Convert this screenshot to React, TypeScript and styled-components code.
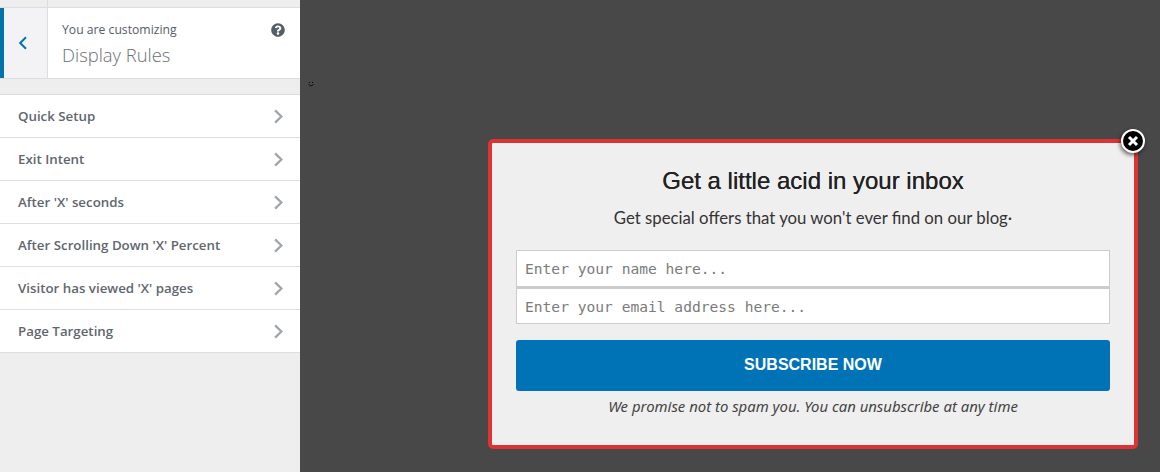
import React from 'react'
import styled, { createGlobalStyle } from 'styled-components'
import { FaQuestionCircle } from 'react-icons/fa'

const GlobalStyle = createGlobalStyle`
  html, body {
    margin: 0;
    padding: 0;
    height: 100%;
    overflow: hidden;
  }
  #root {
    height: 100%;
  }
  * {
    box-sizing: border-box;
  }
`

const Page = styled.div`
  display: flex;
  width: 1160px;
  height: 472px;
  font-family: "Open Sans", "Liberation Sans", sans-serif;
`

const Sidebar = styled.aside`
  width: 300px;
  height: 100%;
  flex: none;
  display: flex;
  flex-direction: column;
  background: #eeeeee;
`

const TopStrip = styled.div`
  height: 8px;
  border-bottom: 1px solid #dddddd;
`

const TopCell = styled.div`
  width: 48px;
  height: 7px;
  border-right: 1px solid #dddddd;
`

const Header = styled.header`
  height: 71px;
  display: flex;
  background: #ffffff;
  border-bottom: 1px solid #dddddd;
`

const BackButton = styled.button`
  width: 48px;
  flex: none;
  display: flex;
  align-items: center;
  justify-content: center;
  padding: 0 5px 0 0;
  background: #f3f3f5;
  border: 0;
  border-left: 4px solid #0073aa;
  border-right: 1px solid #dddddd;
  color: #0073aa;
`

const HeaderText = styled.div`
  flex: 1;
  padding: 13px 0 0 14px;
  color: #555d66;
`

const Eyebrow = styled.div`
  font-size: 12.2px;
  line-height: 17px;
`

const Title = styled.div`
  margin-top: 5px;
  font-size: 18.4px;
  font-weight: 300;
  line-height: 24px;
  color: #6a7178;
`

const HelpIcon = styled(FaQuestionCircle)`
  flex: none;
  margin: 15px 15px 0 0;
  width: 14px;
  height: 14px;
  color: #555d66;
`

const Menu = styled.ul`
  list-style: none;
  margin: 15px 0 0;
  padding: 0;
  border-top: 1px solid #dddddd;
`

const MenuRow = styled.li`
  height: 43px;
  display: flex;
  align-items: center;
  justify-content: space-between;
  padding: 0 17px 0 18px;
  background: #ffffff;
  border-bottom: 1px solid #dddddd;
  color: #5f666e;
  font-size: 13.3px;
  font-weight: 600;
`

const Canvas = styled.main`
  position: relative;
  flex: 1;
  background: #484848;
`

const Smiley = styled.svg`
  position: absolute;
  left: 8px;
  top: 81px;
`

const Popup = styled.section`
  position: absolute;
  left: 188px;
  top: 139px;
  width: 650px;
  height: 310px;
  display: flex;
  flex-direction: column;
  align-items: center;
  padding: 0 24px;
  background: #efefef;
  border: 4px solid #dd3333;
  border-radius: 5px;
`

const Heading = styled.h2`
  margin: 21px 0 0;
  font-family: "Liberation Sans", Arial, sans-serif;
  font-size: 24px;
  font-weight: 400;
  line-height: 34px;
  color: #222222;
  text-shadow: 0 0 0.5px #222222;
`

const Subtitle = styled.p`
  margin: 8px 0 0;
  font-family: Lato, "Open Sans", sans-serif;
  font-size: 16.75px;
  line-height: 24px;
  color: #333333;
`

const Fields = styled.form`
  width: 100%;
  margin-top: 20px;
  display: flex;
  flex-direction: column;
`

const Field = styled.input<{ $thick?: boolean }>`
  width: 100%;
  height: ${p => (p.$thick ? '38px' : '36px')};
  padding: 0 8px;
  background: #ffffff;
  border: 1px solid #cccccc;
  border-bottom-width: ${p => (p.$thick ? '2px' : '1px')};
  border-radius: 0;
  outline: 0;
  font-family: "DejaVu Sans Mono", "Liberation Mono", monospace;
  font-size: 14.6px;
  color: #333333;

  &::placeholder {
    color: #7b7b7b;
    opacity: 1;
  }
`

const SubmitButton = styled.button`
  width: 100%;
  height: 51px;
  margin-top: 16px;
  padding: 0 0 2px;
  background: #0073b7;
  border: 0;
  border-radius: 3px;
  font-family: "Liberation Sans", Arial, sans-serif;
  font-size: 16px;
  font-weight: 700;
  color: #ffffff;
`

const Disclaimer = styled.p`
  margin: 5px 0 0;
  font-family: "Noto Sans", "Open Sans", sans-serif;
  font-size: 14.9px;
  font-style: italic;
  line-height: 20px;
  color: #444444;
`

const CloseButton = styled.button`
  position: absolute;
  right: -11px;
  top: -14px;
  width: 24px;
  height: 24px;
  display: flex;
  align-items: center;
  justify-content: center;
  padding: 0;
  background: #000000;
  border: 2px solid #ffffff;
  border-radius: 50%;
  box-shadow: -1px 2px 4px rgba(0, 0, 0, 0.6);
`

const rules = [
  'Quick Setup',
  'Exit Intent',
  "After 'X' seconds",
  "After Scrolling Down 'X' Percent",
  "Visitor has viewed 'X' pages",
  'Page Targeting',
]

const Chevron = ({ color, size, width }: { color: string; size: number; width: number }) => (
  <svg width={size * 0.7} height={size} viewBox="0 0 10 14" fill="none">
    <path d="M2 1.2 8 7l-6 5.8" stroke={color} strokeWidth={width} />
  </svg>
)

const App = (): JSX.Element => {
  return (
    <Page>
      <GlobalStyle />
      <Sidebar>
        <TopStrip>
          <TopCell />
        </TopStrip>
        <Header>
          <BackButton aria-label="Back">
            <svg width="10" height="14" viewBox="0 0 10 14" fill="none">
              <path d="M8 1.2 2.2 7 8 12.8" stroke="currentColor" strokeWidth="2" />
            </svg>
          </BackButton>
          <HeaderText>
            <Eyebrow>You are customizing</Eyebrow>
            <Title>Display Rules</Title>
          </HeaderText>
          <HelpIcon />
        </Header>
        <Menu>
          {rules.map(rule => (
            <MenuRow key={rule}>
              {rule}
              <Chevron color="#a0a5aa" size={15} width={2.2} />
            </MenuRow>
          ))}
        </Menu>
      </Sidebar>
      <Canvas>
        <Smiley width="6" height="6" viewBox="0 0 6 6" fill="none">
          <path d="M1.5 1v1M4.5 1v1" stroke="#000" />
          <path d="M.5 3.5Q3 6.5 5.5 3.5" stroke="#000" strokeWidth=".8" />
        </Smiley>
        <Popup>
          <CloseButton aria-label="Close">
            <svg width="12" height="12" viewBox="0 0 12 12" fill="none">
              <path d="M2 2l8 8M10 2l-8 8" stroke="#fff" strokeWidth="3" />
            </svg>
          </CloseButton>
          <Heading>Get a little acid in your inbox</Heading>
          <Subtitle>Get special offers that you won't ever find on our blog·</Subtitle>
          <Fields>
            <Field $thick placeholder="Enter your name here..." />
            <Field placeholder="Enter your email address here..." />
            <SubmitButton type="button">SUBSCRIBE NOW</SubmitButton>
          </Fields>
          <Disclaimer>We promise not to spam you. You can unsubscribe at any time</Disclaimer>
        </Popup>
      </Canvas>
    </Page>
  )
}

export default App
